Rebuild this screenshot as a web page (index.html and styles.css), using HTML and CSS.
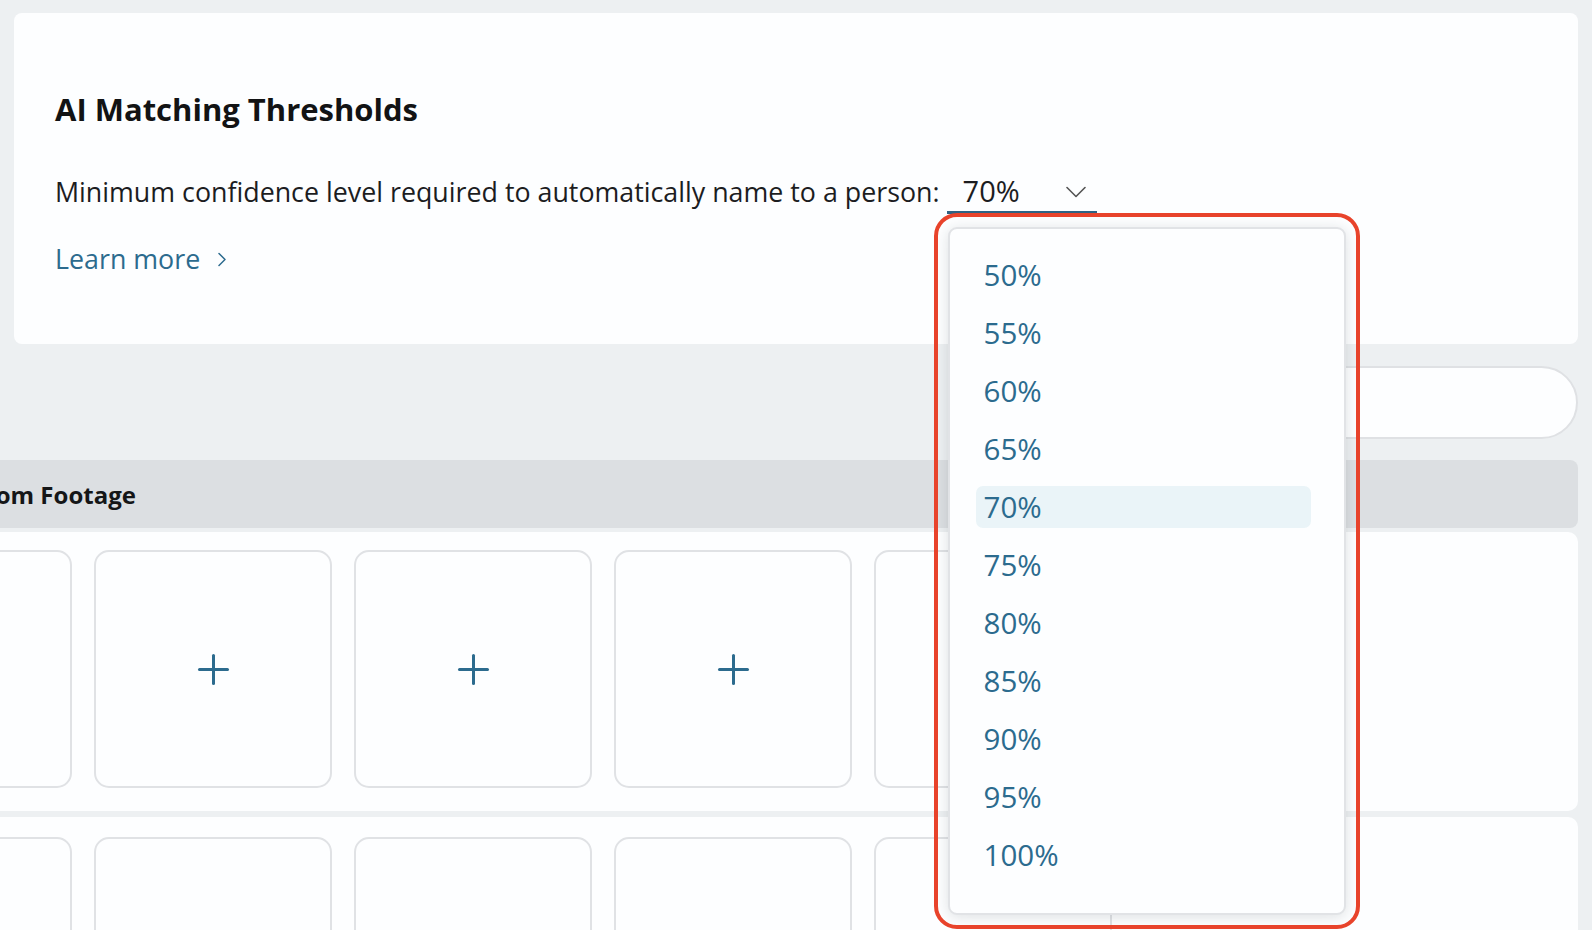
FILE: index.html
```html
<!DOCTYPE html>
<html lang="en">
<head>
    <meta charset="UTF-8">
    <meta name="viewport" content="width=device-width, initial-scale=1.0">
    <title>AI Matching Thresholds</title>
    <link rel="stylesheet" href="styles.css">
</head>
<body>
    <div class="card thresholds">
        <h2 class="card-title">AI Matching Thresholds</h2>
        <div class="field">
            <span class="field-label">Minimum confidence level required to automatically name to a person:</span>
            <div class="select-wrap">
                <div class="select">
                    <span class="select-value">70%</span>
                    <svg class="chevron" width="20" height="12" viewBox="0 0 20 12"><path d="M1 1.5 L10 10.5 L19 1.5" fill="none" stroke="#555" stroke-width="1.6" stroke-linecap="round" stroke-linejoin="round"/></svg>
                </div>
                <ul class="dropdown">
                    <li>50%</li>
                    <li>55%</li>
                    <li>60%</li>
                    <li>65%</li>
                    <li class="selected">70%</li>
                    <li>75%</li>
                    <li>80%</li>
                    <li>85%</li>
                    <li>90%</li>
                    <li>95%</li>
                    <li>100%</li>
                </ul>
            </div>
        </div>
        <a class="learn-more" href="#">Learn more
            <svg width="10" height="15" viewBox="0 0 10 15"><path d="M2 1.5 L8 7.5 L2 13.5" fill="none" stroke="#2c6b8e" stroke-width="1.5" stroke-linecap="round" stroke-linejoin="round"/></svg>
        </a>
    </div>

    <div class="search-row">
        <div class="search"></div>
    </div>

    <div class="faces">
        <div class="faces-header"><span class="faces-title">Add Faces from Footage</span></div>
        <div class="tile-panel">
            <div class="tile"></div>
            <div class="tile"><span class="plus"></span></div>
            <div class="tile"><span class="plus"></span></div>
            <div class="tile"><span class="plus"></span></div>
            <div class="tile"><span class="plus"></span></div>
        </div>
        <div class="tile-panel second">
            <div class="tile"></div>
            <div class="tile"></div>
            <div class="tile"></div>
            <div class="tile"></div>
            <div class="tile"></div>
        </div>
    </div>
</body>
</html>
```

FILE: styles.css
```css
html, body {
    overflow: hidden;
    height: 100%;
}

body {
    margin: 0;
    padding: 13px 14px 0;
    background-color: #edf0f2;
    font-family: "Open Sans", Lato, sans-serif;
    color: #1c1d1f;
}

.card {
    background: #fdfeff;
    border-radius: 8px;
}

.thresholds {
    height: 331px;
    box-sizing: border-box;
    padding: 76px 41px 0;
}

.card-title {
    margin: 0;
    font-size: 31px;
    line-height: 40px;
    font-weight: 700;
    color: #121314;
}

.field {
    display: flex;
    align-items: baseline;
    margin-top: 45px;
    font-size: 26.8px;
    line-height: 34px;
}

.select-wrap {
    position: relative;
    margin-left: 7px;
}

.select {
    display: flex;
    align-items: center;
    justify-content: space-between;
    width: 150px;
    box-sizing: border-box;
    padding: 0 11px 3px 16px;
    border-bottom: 3px solid #2e6283;
}

.select-value {
    font-size: 29px;
}

.chevron {
    margin-top: 2px;
}

.dropdown {
    position: absolute;
    top: calc(100% + 13px);
    left: 1px;
    width: 398px;
    height: 688px;
    box-sizing: border-box;
    margin: 0;
    padding: 25px 33px 0 26px;
    list-style: none;
    display: flex;
    flex-direction: column;
    gap: 16px;
    background: #fdfeff;
    border: 2px solid #e1e3e6;
    border-radius: 9px;
    box-shadow: 0 2px 14px rgba(30, 40, 50, 0.14);
    outline: 4px solid #e8432b;
    outline-offset: 10px;
    z-index: 10;
}

.dropdown li {
    height: 42px;
    line-height: 42px;
    padding-left: 8px;
    border-radius: 7px;
    font-size: 29.5px;
    color: #2c6b8e;
}

.dropdown li.selected {
    background: #eaf4f8;
}

.learn-more {
    display: inline-flex;
    align-items: center;
    gap: 17px;
    margin-top: 28px;
    font-size: 26.8px;
    line-height: 34px;
    color: #2c6b8e;
    text-decoration: none;
}

.search-row {
    display: flex;
    justify-content: flex-end;
    margin-top: 22px;
}

.search {
    width: 580px;
    height: 73px;
    box-sizing: border-box;
    background: #fdfeff;
    border: 2px solid #dfe1e4;
    border-radius: 37px;
}

.faces {
    margin-left: -205px;
}

.faces-header {
    display: flex;
    align-items: center;
    height: 68px;
    margin-top: 21px;
    padding-left: 41px;
    background: #dcdfe2;
    border-radius: 8px;
}

.faces-title {
    font-size: 24px;
    font-weight: 700;
    color: #151617;
}

.tile-panel {
    display: flex;
    gap: 22px;
    margin-top: 4px;
    padding: 18px 26px 23px 25px;
    background: #fdfeff;
    border-radius: 10px;
    overflow: hidden;
}

.tile-panel.second {
    margin-top: 6px;
    padding-top: 20px;
}

.tile {
    flex: none;
    width: 238px;
    height: 238px;
    box-sizing: border-box;
    border: 2px solid #e0e2e5;
    border-radius: 15px;
    display: flex;
    align-items: center;
    justify-content: center;
}

.plus {
    position: relative;
    width: 31px;
    height: 31px;
}

.plus:before,
.plus:after {
    content: '';
    position: absolute;
    background: #2c6b8e;
    border-radius: 2px;
}

.plus:before {
    left: 0;
    top: 14px;
    width: 31px;
    height: 3px;
}

.plus:after {
    left: 14px;
    top: 0;
    width: 3px;
    height: 31px;
}
```
